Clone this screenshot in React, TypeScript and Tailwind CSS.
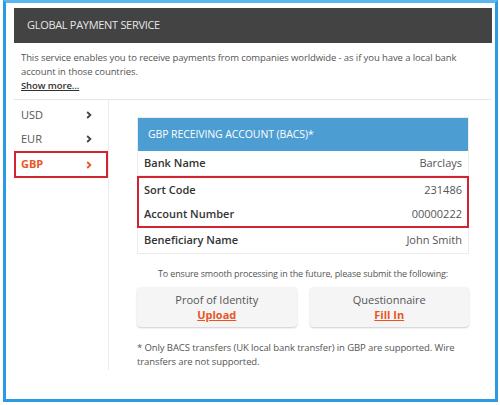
import React from "react";

const Chevron = ({ color }: { color: string }) => (
  <svg width="6" height="8" viewBox="0 0 6 8" fill="none">
    <path d="M1.2 1 L4.4 4 L1.2 7" stroke={color} strokeWidth="1.8" />
  </svg>
);

export default function App() {
  return (
    <div className="w-[500px] h-[405px] bg-white relative" style={{ fontFamily: '"Open Sans", "Noto Sans", sans-serif' }}>
      <div className="absolute left-[3px] top-0 w-[495px] h-[402px] border-[3px] border-[#2a9be2] border-t-[#5ab7ee]">
        <div className="pl-[8px] pr-[3px] pt-[5px]">
          <div className="h-[35px] bg-[#434343] flex items-center pl-[13px] text-[11px] text-[#e6e6e6] tracking-[-0.3px]">
            GLOBAL PAYMENT SERVICE
          </div>
          <div className="px-[7px] pt-[8px] pb-[6px] text-[9.5px] leading-[14px] tracking-[-0.1px] text-[#555] border-b border-[#e6e6e6]">
            <p className="w-[440px]">This service enables you to receive payments from companies worldwide - as if you have a local bank account in those countries.</p>
            <p className="font-semibold text-[#333] underline">Show more...</p>
          </div>
          <div className="flex">
            <div className="w-[95px] border-r border-[#ececec] h-[270px] pt-[3px]">
              <div className="h-[24px] flex items-center justify-between pl-[7px] pr-[16px] text-[11px] text-[#555]">
                <span>USD</span>
                <Chevron color="#444" />
              </div>
              <div className="h-[24px] flex items-center justify-between pl-[7px] pr-[16px] text-[11px] text-[#555]">
                <span>EUR</span>
                <Chevron color="#444" />
              </div>
              <div className="h-[27px] flex items-center justify-between pl-[5px] pr-[14px] text-[11px] font-bold text-[#e8561f] border-2 border-[#d42330]">
                <span>GBP</span>
                <Chevron color="#e8561f" />
              </div>
            </div>
            <div className="flex-1 pl-[28px] pr-[23px] pt-[17px]">
              <div className="border border-[#ececec]">
                <div className="h-[33px] bg-[#4c9dd2] flex items-center pl-[10px] text-[10.5px] text-white tracking-[-0.1px]">
                  GBP RECEIVING ACCOUNT (BACS)*
                </div>
                <div className="h-[25px] flex items-center justify-between pl-[6px] pr-[6px] text-[11px] border-b border-[#f0f0f0]">
                  <span className="font-semibold text-[#333]">Bank Name</span>
                  <span className="text-[#555]">Barclays</span>
                </div>
                <div className="border-2 border-[#d42330] -mx-px">
                  <div className="h-[24px] flex items-center justify-between pl-[5px] pr-[5px] text-[11px]">
                    <span className="font-semibold text-[#333]">Sort Code</span>
                    <span className="text-[#555]">231486</span>
                  </div>
                  <div className="h-[24px] flex items-center justify-between pl-[5px] pr-[5px] text-[11px]">
                    <span className="font-semibold text-[#333]">Account Number</span>
                    <span className="text-[#555]">00000222</span>
                  </div>
                </div>
                <div className="h-[25px] flex items-center justify-between pl-[6px] pr-[6px] text-[11px]">
                  <span className="font-semibold text-[#333]">Beneficiary Name</span>
                  <span className="text-[#555]">John Smith</span>
                </div>
              </div>
              <p className="mt-[13px] text-center text-[9px] tracking-[-0.15px] text-[#555] leading-[14px] whitespace-nowrap">
                To ensure smooth processing in the future, please submit the following:
              </p>
              <div className="mt-[6px] flex gap-[13px]">
                <div className="flex-1 h-[40px] rounded-[4px] bg-[#f5f5f5] shadow-[0_1px_2px_rgba(0,0,0,0.2)] flex flex-col items-center justify-center text-[11px] leading-[15px]">
                  <span className="text-[#555]">Proof of Identity</span>
                  <span className="text-[#e8561f] font-bold underline">Upload</span>
                </div>
                <div className="flex-1 h-[40px] rounded-[4px] bg-[#f5f5f5] shadow-[0_1px_2px_rgba(0,0,0,0.2)] flex flex-col items-center justify-center text-[11px] leading-[15px]">
                  <span className="text-[#555]">Questionnaire</span>
                  <span className="text-[#e8561f] font-bold underline">Fill In</span>
                </div>
              </div>
              <p className="mt-[14px] text-[9.5px] tracking-[-0.1px] leading-[14px] text-[#555]">
                * Only BACS transfers (UK local bank transfer) in GBP are supported. Wire transfers are not supported.
              </p>
            </div>
          </div>
        </div>
      </div>
    </div>
  );
}
